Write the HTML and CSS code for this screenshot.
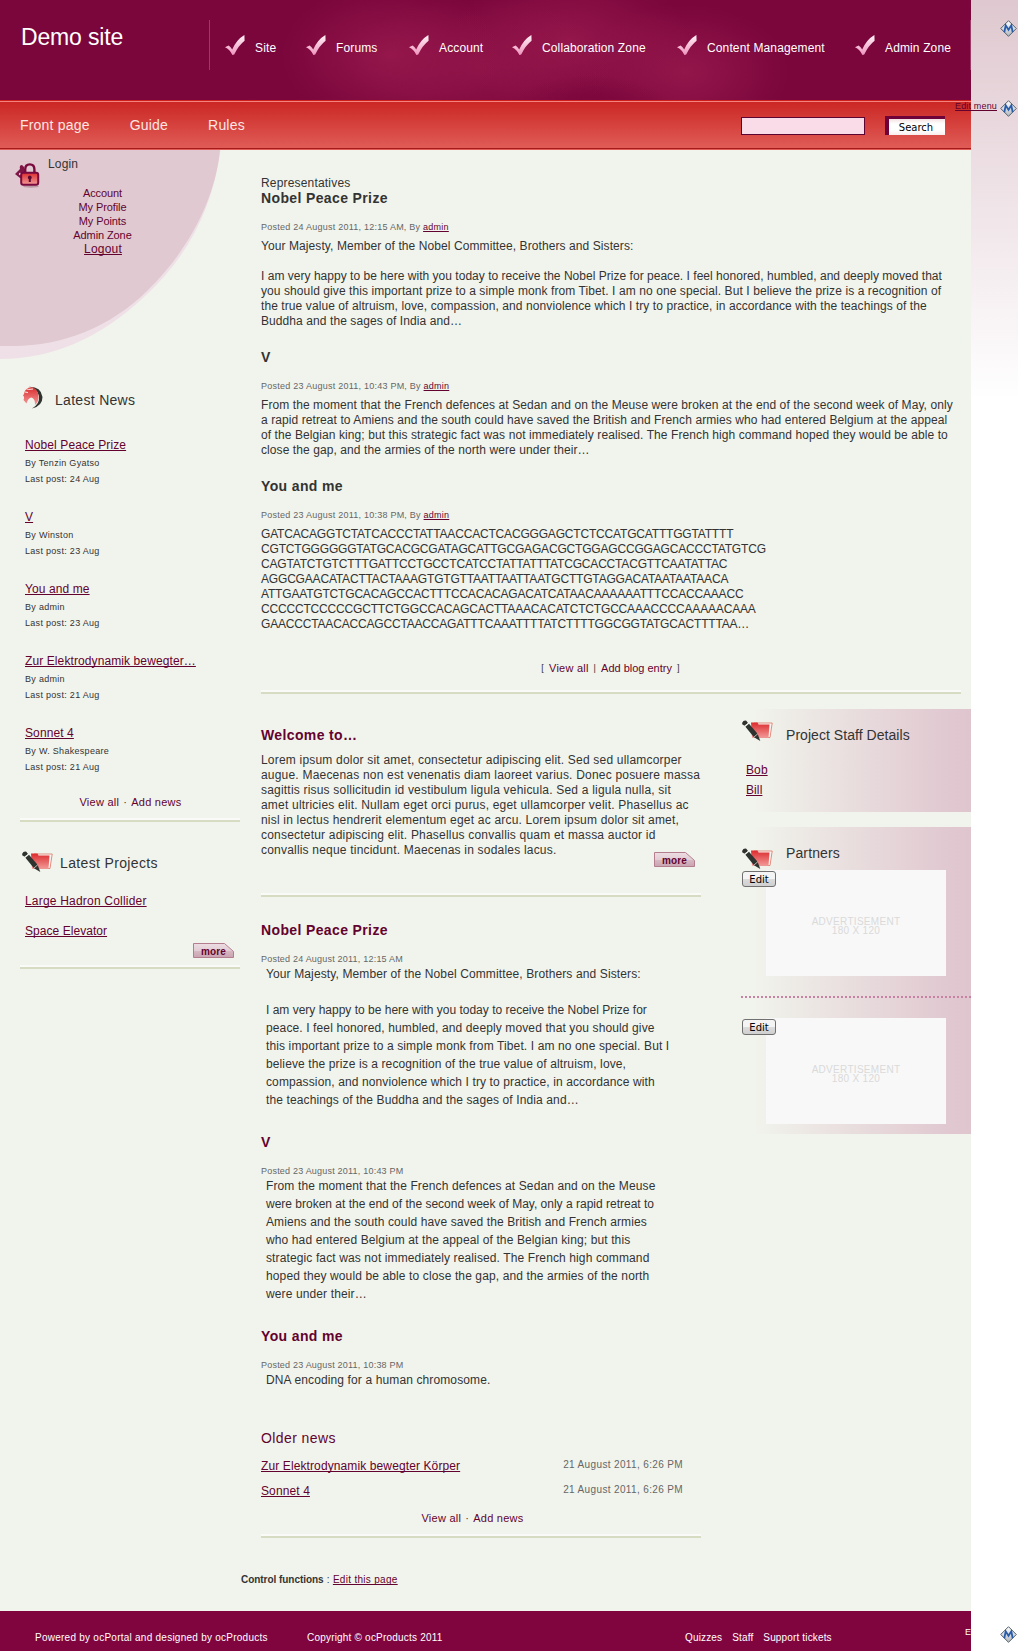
FILE: index.html
```html
<!DOCTYPE html>
<html lang="en">
<head>
<meta charset="utf-8">
<title>Demo site</title>
<link rel="stylesheet" href="styles.css">
</head>
<body>
<svg class="defs" width="0" height="0" aria-hidden="true">
  <defs>
    <linearGradient id="tickFill" x1="0" y1="0" x2="0" y2="1"><stop offset="0" stop-color="#fff4f8"/><stop offset="1" stop-color="#ef93bd"/></linearGradient>
    <linearGradient id="redFill" x1="0" y1="0" x2="0" y2="1"><stop offset="0" stop-color="#dc2b2d"/><stop offset="1" stop-color="#f29a98"/></linearGradient>
    <linearGradient id="metalFill" x1="0" y1="0" x2="0" y2="1"><stop offset="0" stop-color="#ffffff"/><stop offset="1" stop-color="#b3b8bd"/></linearGradient>
    <linearGradient id="moreFill" x1="0" y1="0" x2="0" y2="1"><stop offset="0" stop-color="#eddde3"/><stop offset=".5" stop-color="#e3cdd5"/><stop offset=".55" stop-color="#d6b7c2"/><stop offset="1" stop-color="#c9a3b0"/></linearGradient>
    <symbol id="tick" viewBox="0 0 20 20"><path fill="url(#tickFill)" d="M0 12.3 3.6 10.6Q5.800 12 7.200 14.600 11.500 4.600 19.400 0L19.600 5.800Q13.500 10.500 9.200 19.600L7.400 19.900Q4.800 14.500 0 12.300Z"/></symbol>
    <symbol id="folder" viewBox="0 0 31 22"><path fill="#fdf6f4" stroke="#d9745f" stroke-width=".8" d="M12 3H30.200L28 17.500H13Z"/><path fill="url(#redFill)" d="M9 2.500H15.500L16.500 4.500H27.500L26.500 17.800H10Z"/><path fill="#2f3330" d="M.2 2.800Q1.500 0 4.300 .800L6 2.900 2.600 5.800 .2 4.300ZM3.400 6.800 7 3.700 15.600 13.800 18.300 21 12 17.200Z"/><path stroke="#f1f4ec" stroke-width=".7" d="M2.400 6.200 6.400 3M11.900 17.100 15.900 13.700"/></symbol>
    <symbol id="gem" viewBox="0 0 17 17"><path fill="url(#metalFill)" stroke="#4f5f6c" d="M8.500.7 16.300 8.500 8.500 16.300.7 8.500Z"/><path fill="none" stroke="#285cad" stroke-width="1.800" d="M4.300 12.300 5.700 5.300 8.500 9.700 11.300 5.300 12.700 12.300"/></symbol>
    <symbol id="more" viewBox="0 0 41 15"><path fill="url(#moreFill)" stroke="#b57e90" d="M.5.500H31.500L40.500 8.500V14.500H.5Z"/></symbol>
  </defs>
</svg>

<div class="page">
  <header class="header">
    <h1 class="logo">Demo site</h1>
    <nav class="zones">
      <a class="zone zone-site"><svg><use href="#tick"/></svg>Site</a>
      <a class="zone zone-short"><svg><use href="#tick"/></svg>Forums</a>
      <a class="zone zone-short"><svg><use href="#tick"/></svg>Account</a>
      <a class="zone zone-collab"><svg><use href="#tick"/></svg>Collaboration Zone</a>
      <a class="zone zone-cms"><svg><use href="#tick"/></svg>Content Management</a>
      <a class="zone"><svg><use href="#tick"/></svg>Admin Zone</a>
    </nav>
  </header>

  <div class="navbar">
    <nav class="menu"><a>Front page</a><a>Guide</a><a>Rules</a></nav>
    <form class="search"><input type="text" class="search-box" aria-label="Search"><button type="button" class="search-button">Search</button></form>
  </div>

  <div class="content">
    <aside class="left">
      <section class="login">
        <svg class="login-arc" viewBox="0 0 221 210"><path fill="#efe0e8" d="M0 0H220.500Q209 88 144 147 78 209 0 209Z"/><path fill="#e0c9d0" d="M0 0H220C215 50 188 101 148 140 111 177 62 196 14 196H0Z"/></svg>
        <div class="login-head">
          <svg class="lock" viewBox="0 0 25 25"><path fill="#7d1545" d="M0 11 5 6Q4 2 7 2L9 4V15H5Z"/><circle cx="5" cy="11" r="1.200" fill="#e0c9d0"/><ellipse cx="16" cy="23.500" rx="8" ry="1.200" fill="#b99aa5"/><path fill="none" stroke="#7a0a3e" stroke-width="2.400" d="M10.200 10V6.500Q10.200 1.400 14.800 1.400T19.400 6.500V10"/><rect x="6.200" y="9.700" width="17" height="12" rx="2" fill="url(#redFill)" stroke="#7a0a3e" stroke-width="2"/><path fill="#5c0830" d="M14.800 12.500A2 2 0 0 1 15.800 16.200V19H13.800V16.200A2 2 0 0 1 14.800 12.500Z"/></svg>
          <h2>Login</h2>
        </div>
        <ul class="login-links"><li>Account</li><li>My Profile</li><li>My Points</li><li>Admin Zone</li><li class="logout"><a>Logout</a></li></ul>
      </section>

      <section class="side-news">
        <div class="side-head">
          <svg class="swirl" viewBox="0 0 20 23"><path fill="#2f3330" d="M6 .8Q18 .500 19.500 11 19.500 20 9 22.500 17 18 16 10 14 2 6 .8Z"/><path fill="url(#redFill)" d="M1 8Q2 1 9 1.200 14.500 3 15.500 9.500 16 16 12 19 12.500 13 8.500 11.500 5 12 3.500 17.500L.5 14Q1.800 11 0 9.500Z"/><path stroke="#fbeceb" stroke-width="1" fill="none" d="M1.500 2.500Q6 4 10 3M2 6 5 6.500"/></svg>
          <h2>Latest News</h2>
        </div>
        <ul class="threads">
          <li><a>Nobel Peace Prize</a><span>By Tenzin Gyatso</span><span>Last post: 24 Aug</span></li>
          <li><a>V</a><span>By Winston</span><span>Last post: 23 Aug</span></li>
          <li><a>You and me</a><span>By admin</span><span>Last post: 23 Aug</span></li>
          <li><a>Zur Elektrodynamik bewegter…</a><span>By admin</span><span>Last post: 21 Aug</span></li>
          <li><a>Sonnet 4</a><span>By W. Shakespeare</span><span>Last post: 21 Aug</span></li>
        </ul>
        <p class="actions"><a>View all</a><i>·</i><a>Add news</a></p>
        <hr>
      </section>

      <section class="projects">
        <div class="side-head">
          <svg class="folder"><use href="#folder"/></svg>
          <h2>Latest Projects</h2>
        </div>
        <ul class="project-list"><li><a>Large Hadron Collider</a></li><li><a class="snug">Space Elevator</a></li></ul>
        <a class="more"><svg><use href="#more"/></svg><span>more</span></a>
        <hr>
      </section>
    </aside>

    <main class="main">
      <section class="featured">
        <p class="kicker">Representatives</p>
        <h3>Nobel Peace Prize</h3>
        <p class="posted">Posted 24 August 2011, 12:15 AM, By <a>admin</a></p>
        <p class="text">Your Majesty, Member of the Nobel Committee, Brothers and Sisters:<br><br><span class="snug">I am very happy to be here with you today to receive the Nobel Prize for peace. I feel honored, humbled, and deeply moved that</span><br>you should give this important prize to a simple monk from Tibet. I am no one special. But I believe the prize is a recognition of<br>the true value of altruism, love, compassion, and nonviolence which I try to practice, in accordance with the teachings of the<br>Buddha and the sages of India and…</p>
        <h3>V</h3>
        <p class="posted">Posted 23 August 2011, 10:43 PM, By <a>admin</a></p>
        <p class="text">From the moment that the French defences at Sedan and on the Meuse were broken at the end of the second week of May, only<br>a rapid retreat to Amiens and the south could have saved the British and French armies who had entered Belgium at the appeal<br>of the Belgian king; but this strategic fact was not immediately realised. The French high command hoped they would be able to<br>close the gap, and the armies of the north were under their…</p>
        <h3>You and me</h3>
        <p class="posted">Posted 23 August 2011, 10:38 PM, By <a>admin</a></p>
        <p class="text dna">GATCACAGGTCTATCACCCTATTAACCACTCACGGGAGCTCTCCATGCATTTGGTATTTT<br>CGTCTGGGGGGTATGCACGCGATAGCATTGCGAGACGCTGGAGCCGGAGCACCCTATGTCG<br>CAGTATCTGTCTTTGATTCCTGCCTCATCCTATTATTTATCGCACCTACGTTCAATATTAC<br>AGGCGAACATACTTACTAAAGTGTGTTAATTAATTAATGCTTGTAGGACATAATAATAACA<br>ATTGAATGTCTGCACAGCCACTTTCCACACAGACATCATAACAAAAAATTTCCACCAAACC<br>CCCCCTCCCCCGCTTCTGGCCACAGCACTTAAACACATCTCTGCCAAACCCCAAAAACAAA<br>GAACCCTAACACCAGCCTAACCAGATTTCAAATTTTATCTTTTGGCGGTATGCACTTTTAA…</p>
        <p class="blog-actions"><i>[</i><a>View all</a><i>|</i><a class="snug">Add blog entry</a><i>]</i></p>
        <hr>
      </section>

      <div class="columns">
        <div class="center">
          <section class="welcome">
            <h3>Welcome to…</h3>
            <p class="text">Lorem ipsum dolor sit amet, consectetur adipiscing elit. Sed sed ullamcorper<br>augue. Maecenas non est venenatis diam laoreet varius. Donec posuere massa<br>sagittis risus sollicitudin id vestibulum ligula vehicula. Sed a ligula nulla, sit<br>amet ultricies elit. Nullam eget orci purus, eget ullamcorper velit. Phasellus ac<br>nisl in lectus hendrerit elementum eget ac arcu. Lorem ipsum dolor sit amet,<br>consectetur adipiscing elit. Phasellus convallis quam et massa auctor id<br>convallis neque tincidunt. Maecenas in sodales lacus.</p>
            <a class="more"><svg><use href="#more"/></svg><span>more</span></a>
            <hr>
          </section>

          <section class="news">
            <h3>Nobel Peace Prize</h3>
            <p class="posted">Posted 24 August 2011, 12:15 AM</p>
            <p class="text">Your Majesty, Member of the Nobel Committee, Brothers and Sisters:<br><br><span class="snug">I am very happy to be here with you today to receive the Nobel Prize for</span><br>peace. I feel honored, humbled, and deeply moved that you should give<br>this important prize to a simple monk from Tibet. I am no one special. But I<br>believe the prize is a recognition of the true value of altruism, love,<br>compassion, and nonviolence which I try to practice, in accordance with<br>the teachings of the Buddha and the sages of India and…</p>
            <h3>V</h3>
            <p class="posted">Posted 23 August 2011, 10:43 PM</p>
            <p class="text">From the moment that the French defences at Sedan and on the Meuse<br><span class="snug">were broken at the end of the second week of May, only a rapid retreat to</span><br>Amiens and the south could have saved the British and French armies<br>who had entered Belgium at the appeal of the Belgian king; but this<br>strategic fact was not immediately realised. The French high command<br>hoped they would be able to close the gap, and the armies of the north<br>were under their…</p>
            <h3>You and me</h3>
            <p class="posted">Posted 23 August 2011, 10:38 PM</p>
            <p class="text">DNA encoding for a human chromosome.</p>
            <h4>Older news</h4>
            <ul class="older"><li><a>Zur Elektrodynamik bewegter Körper</a><time>21 August 2011, 6:26 PM</time></li><li><a>Sonnet 4</a><time>21 August 2011, 6:26 PM</time></li></ul>
            <p class="actions"><a>View all</a><i>·</i><a>Add news</a></p>
            <hr>
          </section>
        </div>

        <aside class="right">
          <section class="panel staff">
            <div class="panel-head"><svg class="folder"><use href="#folder"/></svg><h2>Project Staff Details</h2></div>
            <ul><li><a>Bob</a></li><li><a>Bill</a></li></ul>
          </section>
          <section class="panel partners">
            <div class="panel-head"><svg class="folder"><use href="#folder"/></svg><h2>Partners</h2></div>
            <div class="ad-slot"><div class="ad">ADVERTISEMENT<br>180 X 120</div><button type="button" class="edit">Edit</button></div>
            <div class="dots"></div>
            <div class="ad-slot"><div class="ad">ADVERTISEMENT<br>180 X 120</div><button type="button" class="edit">Edit</button></div>
          </section>
        </aside>
      </div>
    </main>
  </div>

  <p class="control"><b>Control functions</b> : <a>Edit this page</a></p>

  <footer class="footer">
    <span class="powered">Powered by ocPortal and designed by ocProducts</span>
    <span class="copyright">Copyright © ocProducts 2011</span>
    <nav><a>Quizzes</a><a>Staff</a><a>Support tickets</a></nav>
    <span class="footer-edit">Edit menu</span>
  </footer>
</div>

<div class="tool tool-zones"><svg><use href="#gem"/></svg></div>
<div class="tool tool-menu"><a>Edit menu</a><svg><use href="#gem"/></svg></div>
<div class="tool tool-footer"><svg><use href="#gem"/></svg></div>
</body>
</html>
```
FILE: styles.css
```css
* { box-sizing: border-box; }
html { background: #fff; }
body {
  margin: 0;
  position: relative;
  height: 1651px;
  background: linear-gradient(#dfc8cf, #fff) no-repeat 0 0 / 100% 400px;
  font: 12px/15px "Liberation Sans", Arial, sans-serif;
  color: #333;
  overflow: hidden;
}
h1, h2, h3, h4, p, ul { margin: 0; padding: 0; font-weight: normal; }
ul { list-style: none; }
i { font-style: normal; }
a { color: #63022f; }
svg { display: block; }
.defs { position: absolute; }
hr {
  height: 4px;
  margin: 0;
  border: 0;
  border-top: 2px solid #fafbf8;
  background: #d6dcc1;
}
.page {
  width: 971px;
  min-height: 1651px;
  display: flex;
  flex-direction: column;
  background: #f1f4ec;
  overflow: hidden;
}

/* Header */
.header {
  height: 100px;
  display: flex;
  background:
    radial-gradient(ellipse 80px 35px at 590px 110px, #7b063ccc 20%, #7b063c00),
    radial-gradient(ellipse 110px 72px at 390px 55px, #9a1a4ecc, #9a1a4e00),
    radial-gradient(ellipse 130px 72px at 480px 68px, #9a1a4e99, #9a1a4e00),
    radial-gradient(ellipse 120px 72px at 570px 42px, #9a1a4ecc, #9a1a4e00),
    radial-gradient(ellipse 105px 68px at 685px 72px, #9a1a4ecc, #9a1a4e00),
    #7a063c;
}
.logo {
  width: 209px;
  padding: 24px 0 0 21px;
  font-size: 23px;
  line-height: 27px;
  letter-spacing: -.15px;
  color: #fff;
}
.zones {
  width: 762px;
  height: 50px;
  margin-top: 20px;
  padding: 15px 0 0 15px;
  display: flex;
  border: solid #9d3966;
  border-width: 0 1px;
}
.zone {
  display: flex;
  gap: 10px;
  height: 20px;
  color: #fff;
  letter-spacing: .13px;
  line-height: 26px;
  white-space: nowrap;
}
.zone svg { width: 20px; height: 20px; }
.zone-site { width: 81px; }
.zone-short { width: 103px; }
.zone-collab { width: 165px; }
.zone-cms { width: 178px; }

/* Menu bar */
.navbar {
  height: 50px;
  display: flex;
  justify-content: space-between;
  padding: 14px 26px 0 20px;
  background:
    linear-gradient(#cc1f1c, #cc1f1c) 0 0 / 100% 1px no-repeat,
    linear-gradient(#f5837d, #f5837d) 0 1px / 100% 1px no-repeat,
    linear-gradient(#a51b1b, #a51b1b) 0 48px / 100% 1px no-repeat,
    linear-gradient(#ca2522, #e15e59);
}
.menu { display: flex; gap: 40px; padding-top: 3px; font-size: 14px; line-height: 16px; letter-spacing: .2px; }
.menu a { color: #fce6e3; }
.search { display: flex; align-items: flex-start; gap: 20px; }
.search-box { width: 124px; height: 18px; margin-top: 3px; padding: 0; border: 1px solid #5c0533; background: #fadce8; }
.search-button {
  width: 60px;
  height: 19px;
  margin-top: 2px;
  padding: 2px 2px 0 0;
  border: solid #6f0339;
  border-width: 3px 0 0 4px;
  background: linear-gradient(#f5e1e1, #fff 30%, #fff 70%, #f9ecec);
  font: 10px/12px "DejaVu Sans", Verdana, sans-serif;
  color: #000;
}

/* Columns */
.content { display: grid; grid-template-columns: 240px 731px; }
.left { width: 240px; }

/* Login */
.login { position: relative; height: 236px; }
.login-arc { position: absolute; top: 0; left: 0; width: 221px; height: 210px; }
.login-head { position: relative; display: flex; gap: 8px; padding: 7px 0 0 15px; height: 36px; }
.login-head h2 { font-size: 12px; letter-spacing: .15px; }
.lock { width: 25px; height: 25px; margin-top: 6px; }
.login-links { position: relative; width: 205px; text-align: center; font-size: 11px; line-height: 14px; color: #63022f; letter-spacing: -.1px; }
.logout { font-size: 12px; letter-spacing: .2px; padding-left: 1px; }
.logout a, .threads a, .project-list a, .posted a, .older a, .staff li a, .control a, .tool a { text-decoration: underline; text-underline-offset: 1px; text-decoration-thickness: 1px; text-decoration-skip-ink: none; }

/* Left lists */
.side-head h2, .panel-head h2 { font-size: 14px; line-height: 16px; }
.side-head { display: flex; }
.side-news .side-head { padding-left: 23px; gap: 12px; }
.side-news h2 { padding-top: 6px; letter-spacing: .3px; }
.swirl { width: 20px; height: 23px; }
.threads { padding: 29px 0 0 25px; }
.threads li { height: 72px; display: flex; flex-direction: column; align-items: flex-start; }
.threads a { letter-spacing: .1px; }
.threads span { font-size: 9px; line-height: 16px; letter-spacing: .3px; }
.threads span:nth-child(2) { padding-top: 3px; line-height: 15px; }
.actions { display: flex; justify-content: center; font-size: 11px; line-height: 14px; letter-spacing: .25px; }
.actions i { width: 12px; text-align: center; }
.side-news .actions { padding: 0 0 9px 21px; margin-top: -3px; }
.left hr { margin-left: 20px; }
.folder { width: 31px; height: 22px; }
.projects { padding-top: 29px; }
.projects .side-head { padding-left: 22px; gap: 7px; }
.projects h2 { padding-top: 4px; letter-spacing: .35px; }
.project-list { padding: 21px 0 0 25px; letter-spacing: .2px; }
.project-list .snug { letter-spacing: .05px; }
.project-list li { height: 30px; }
.more { position: relative; display: block; width: 41px; height: 15px; margin-left: auto; }
.more svg { width: 41px; height: 15px; }
.more span { position: absolute; left: 8px; top: 3px; font: bold 10px/12px "Liberation Sans", Arial, sans-serif; letter-spacing: .12px; }
.projects .more { margin: -11px 6px 7px auto; }

/* Articles */
.main { padding-left: 21px; }
.text { white-space: nowrap; letter-spacing: .12px; }
.main h3 { font-size: 14px; font-weight: bold; line-height: 15px; letter-spacing: .37px; }
.posted { margin-top: 16px; font-size: 9px; line-height: 11px; letter-spacing: .21px; color: #666; }
.featured { width: 700px; padding-top: 26px; }
.featured .posted { letter-spacing: .24px; }
.kicker { letter-spacing: .18px; }
.featured .text { margin: 6px 0 21px; letter-spacing: .085px; }
.featured .text .snug { letter-spacing: .025px; }
.featured .text.dna { margin-bottom: 29px; letter-spacing: -.18px; }
.blog-actions { display: flex; justify-content: center; gap: 5px; padding-right: 1px; margin-bottom: 15px; font-size: 11px; line-height: 14px; letter-spacing: .22px; }
.blog-actions .snug { letter-spacing: -.01px; }
.blog-actions i { font-size: 9px; }
.columns { display: grid; grid-template-columns: 440px 230px; gap: 40px; }
.center h3, .center h4 { color: #63022f; }
.welcome { padding-top: 34px; }
.welcome .text { margin-top: 10px; letter-spacing: .2px; }
.welcome .more { margin: -6px 6px 26px auto; }
.news { padding-top: 26px; }
.news .text { padding-left: 5px; line-height: 18px; margin-bottom: 26px; }
.news .text .snug { letter-spacing: 0; }
.news h4 { margin-top: 41px; font-size: 14px; line-height: 16px; letter-spacing: .4px; }
.older { padding-top: 13px; }
.older li { display: flex; justify-content: space-between; height: 25px; padding-right: 18px; }
.older a { letter-spacing: .11px; }
.older time { margin-top: -1px; font-size: 10px; line-height: 13px; letter-spacing: .36px; color: #666; }
.news .actions { padding: 2px 17px 9px 0; }

/* Right panels */
.right { padding-top: 15px; }
.panel { background: linear-gradient(90deg, #f1f4ec 5%, #e1c9d1 88%, #dfc5ce); }
.panel-head { display: flex; gap: 13px; padding-left: 1px; }
.staff { height: 103px; margin-bottom: 15px; padding-top: 11px; }
.staff h2 { padding-top: 7px; letter-spacing: .05px; }
.staff ul { padding: 20px 0 0 5px; }
.staff li { height: 20px; letter-spacing: .1px; }
.partners { height: 307px; }
.partners .panel-head { height: 43px; }
.partners .folder { margin-top: 21px; }
.partners h2 { padding-top: 18px; letter-spacing: .12px; }
.ad-slot { position: relative; padding-left: 25px; }
.ad { width: 180px; height: 106px; padding-top: 47px; background: #f8f8f8; color: #dadada; font-size: 10px; line-height: 9px; letter-spacing: .3px; text-align: center; }
.edit { position: absolute; left: 1px; top: 1px; width: 34px; height: 16px; padding: 0; border: 1px solid #707070; border-radius: 3px; background: linear-gradient(#f4f4f4 50%, #dcdcdc 50%, #cfcfcf); font: 10px/13px "DejaVu Sans", Verdana, sans-serif; color: #000; }
.dots { height: 2px; margin: 20px 0; background: repeating-linear-gradient(90deg, #c782a4 0 2px, transparent 2px 4px); }

/* Footer */
.control { padding: 36px 0 0 241px; font-size: 10px; line-height: 12px; letter-spacing: .3px; }
.control b { letter-spacing: -.04px; }
.footer { height: 40px; margin-top: auto; display: flex; padding: 21px 0 0 35px; background: #80053f; color: #fff; font-size: 10px; line-height: 12px; white-space: nowrap; overflow: hidden; }
.footer > * { flex: none; }
.footer a { color: #fff; }
.powered { width: 272px; letter-spacing: .25px; }
.copyright { width: 378px; letter-spacing: .2px; }
.footer nav { display: flex; gap: 10px; width: 280px; letter-spacing: .15px; }
.footer-edit { font-size: 9px; margin-top: -6px; }

/* Administration shortcuts over the page edge */
.tool { position: absolute; right: 1px; display: flex; gap: 3px; font-size: 9px; line-height: 12px; letter-spacing: .16px; }
.tool svg { width: 17px; height: 17px; }
.tool-zones { top: 20px; }
.tool-menu { top: 100px; }
.tool-footer { top: 1626px; }
```
